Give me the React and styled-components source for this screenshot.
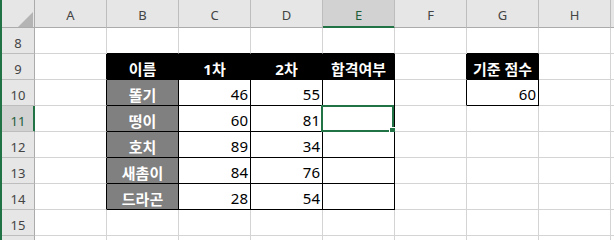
import React from 'react';
import styled, { createGlobalStyle, css } from 'styled-components';

const GREEN = '#217346';
const GRID = '#d4d4d4';
const HEAD_BG = '#e6e6e6';
const HEAD_LINE = '#bdbdbd';

const GlobalStyle = createGlobalStyle`
  html, body { margin: 0; padding: 0; background: #fff; }
  body { width: 614px; height: 240px; overflow: hidden; }
  *, *::before, *::after { box-sizing: border-box; }
`;

const Sheet = styled.div`
  display: grid;
  grid-template-columns: 33px repeat(8, 72px) 1fr;
  grid-template-rows: 28px repeat(9, 26px);
  width: 614px;
  height: 240px;
  overflow: hidden;
  border-left: 2px solid ${GREEN};
  font-family: "Noto Sans", "Noto Sans CJK KR", sans-serif;
`;

const Corner = styled.div`
  background: ${HEAD_BG};
  border-right: 1px solid #ababab;
  border-bottom: 1px solid #ababab;
  display: flex;
  justify-content: flex-end;
  align-items: flex-end;
  padding: 0 1px 0 0;
`;

const ColHeader = styled.div`
  background: ${HEAD_BG};
  border-right: 1px solid ${HEAD_LINE};
  border-bottom: 1px solid #ababab;
  color: #444;
  font-size: 13px;
  display: flex;
  align-items: center;
  justify-content: center;
  padding-top: 3px;
  ${(p) =>
    p.$active &&
    css`
      background: #d2d2d2;
      color: #1d5e3a;
      border-bottom-color: ${GREEN};
      box-shadow: inset 0 -1px 0 ${GREEN};
    `}
`;

const RowHeader = styled.div`
  background: ${HEAD_BG};
  border-right: 1px solid #ababab;
  border-bottom: 1px solid ${HEAD_LINE};
  color: #444;
  font-size: 13px;
  display: flex;
  align-items: center;
  justify-content: center;
  padding-top: 5px;
  ${(p) =>
    p.$active &&
    css`
      background: #d2d2d2;
      color: #1d5e3a;
      border-right-color: ${GREEN};
      box-shadow: inset -1px 0 0 ${GREEN};
    `}
`;

const Cell = styled.div`
  position: relative;
  background: ${(p) => p.$fill || '#fff'};
  border-right: 1px solid ${(p) => p.$right || GRID};
  border-bottom: 1px solid ${(p) => p.$bottom || GRID};
  color: ${(p) => (p.$fill ? '#fff' : '#000')};
  font-size: 15px;
  font-weight: ${(p) => (p.$bold ? 700 : 400)};
  display: flex;
  align-items: center;
  justify-content: ${(p) => (p.$align === 'right' ? 'flex-end' : 'center')};
  padding: 3px 2px 0 2px;
  white-space: nowrap;
`;

const Selection = styled.div`
  position: absolute;
  top: -1px;
  left: -2px;
  right: 0;
  bottom: -1px;
  border: 2px solid ${GREEN};
  pointer-events: none;
`;

const Handle = styled.div`
  position: absolute;
  right: -4px;
  bottom: -4px;
  width: 7px;
  height: 7px;
  background: ${GREEN};
  border: 1px solid #fff;
`;

const COLS = ['A', 'B', 'C', 'D', 'E', 'F', 'G', 'H'];
const ROWS = [8, 9, 10, 11, 12, 13, 14, 15, 16];
const LAST_VISIBLE_ROW = 15;

const names = { 10: '똘기', 11: '떵이', 12: '호치', 13: '새촘이', 14: '드라곤' };
const scores = {
  10: [46, 55],
  11: [60, 81],
  12: [89, 34],
  13: [84, 76],
  14: [28, 54],
};

const content = {
  B9: { v: '이름', fill: '#000', bold: true },
  C9: { v: '1차', fill: '#000', bold: true },
  D9: { v: '2차', fill: '#000', bold: true },
  E9: { v: '합격여부', fill: '#000', bold: true },
  G9: { v: '기준 점수', fill: '#000', bold: true },
  G10: { v: '60', align: 'right' },
};
Object.entries(names).forEach(([r, n]) => {
  content[`B${r}`] = { v: n, fill: '#808080', bold: true };
  content[`C${r}`] = { v: String(scores[r][0]), align: 'right' };
  content[`D${r}`] = { v: String(scores[r][1]), align: 'right' };
});

const inBox = (ci, r) =>
  (ci >= 1 && ci <= 4 && r >= 9 && r <= 14) || (ci === 6 && r >= 9 && r <= 10);

export default function App() {
  return (
    <>
      <GlobalStyle />
      <Sheet>
        <Corner>
          <svg width="15" height="15" viewBox="0 0 15 15">
            <polygon points="15,0 15,15 0,15" fill="#b4b4b4" />
          </svg>
        </Corner>
        {COLS.map((c) => (
          <ColHeader key={c} $active={c === 'E'}>
            {c}
          </ColHeader>
        ))}
        <ColHeader />
        {ROWS.map((r) => (
          <React.Fragment key={r}>
            <RowHeader $active={r === 11}>{r <= LAST_VISIBLE_ROW ? r : null}</RowHeader>
            {COLS.map((c, ci) => {
              const item = content[`${c}${r}`];
              const right = inBox(ci, r) || inBox(ci + 1, r) ? '#000' : undefined;
              const bottom = inBox(ci, r) || inBox(ci, r + 1) ? '#000' : undefined;
              const selected = c === 'E' && r === 11;
              return (
                <Cell
                  key={c}
                  $fill={item && item.fill}
                  $bold={item && item.bold}
                  $align={item && item.align}
                  $right={right}
                  $bottom={bottom}
                >
                  {item && item.v}
                  {selected && (
                    <Selection>
                      <Handle />
                    </Selection>
                  )}
                </Cell>
              );
            })}
            <Cell />
          </React.Fragment>
        ))}
      </Sheet>
    </>
  );
}
